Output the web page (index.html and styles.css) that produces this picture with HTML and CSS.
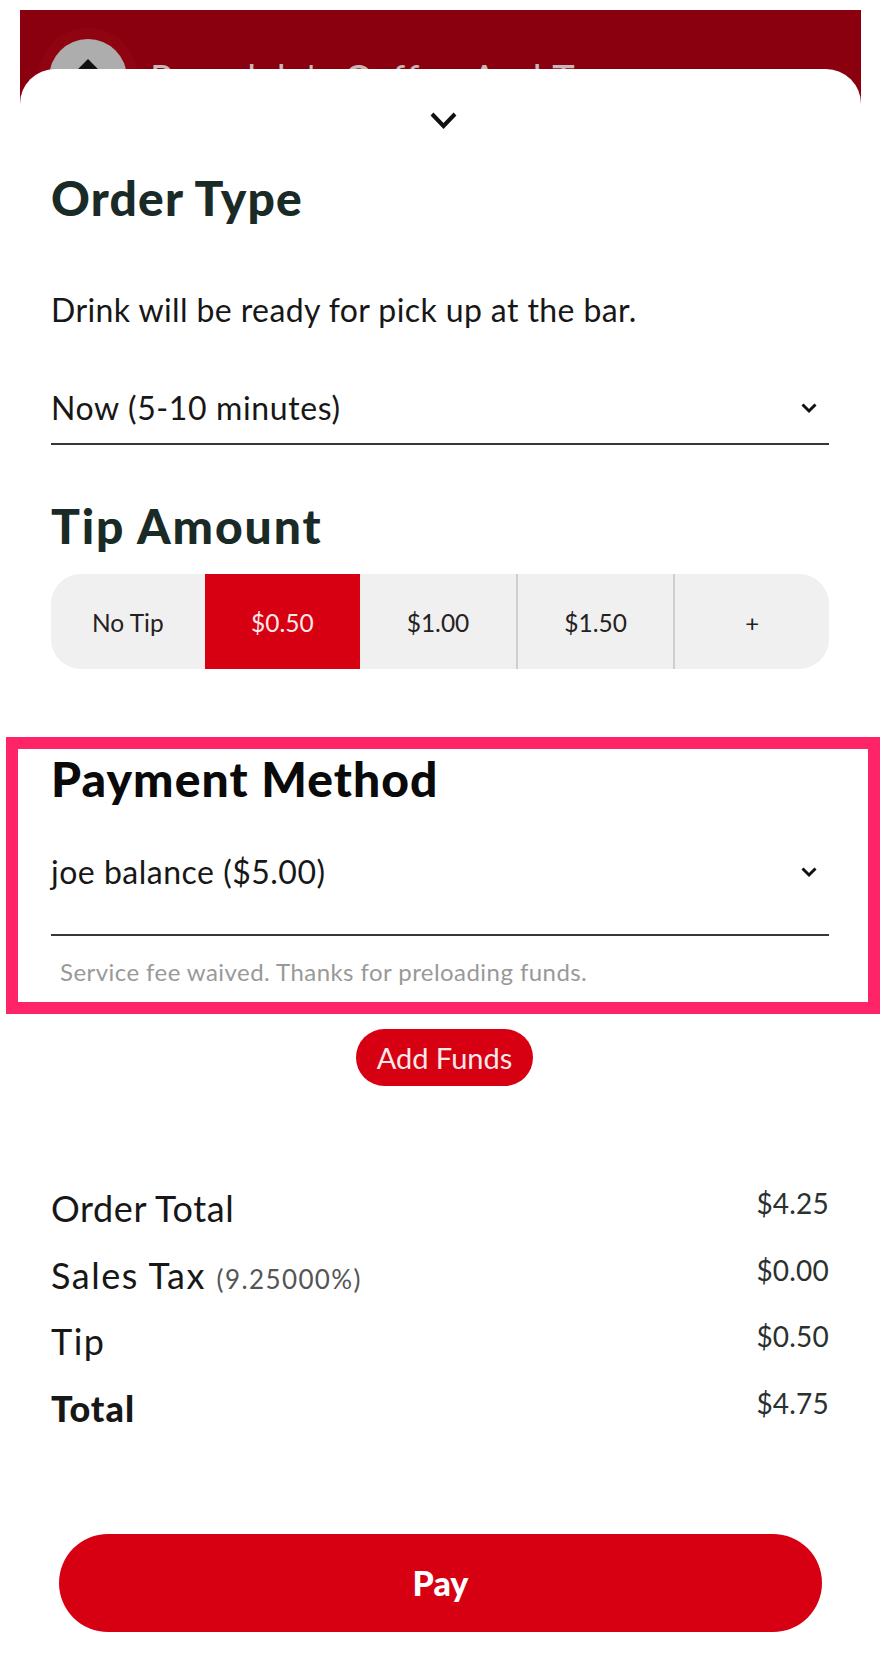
FILE: index.html
```html
<!DOCTYPE html>
<html lang="en">
<head>
<meta charset="utf-8">
<title>Checkout</title>
<link rel="stylesheet" href="styles.css">
</head>
<body>
<div class="frame">
  <header class="venue">
    <div class="avatar-glow"><div class="avatar"><span class="avatar-arrow"></span></div></div>
    <div class="venue-name">Rosedale's Coffee And Tea</div>
  </header>
  <main class="sheet">
    <div class="handle">
      <svg class="handle-icon" viewBox="0 0 27 17" aria-hidden="true"><path d="M2 2 L13.5 14 L25 2" fill="none" stroke="#111" stroke-width="4"/></svg>
    </div>
    <h2 class="heading">Order Type</h2>
    <p class="note">Drink will be ready for pick up at the bar.</p>
    <div class="select select-time">
      <span>Now (5-10 minutes)</span>
      <svg class="caret" viewBox="0 0 16 11" aria-hidden="true"><path d="M1.5 1.5 L8 8 L14.5 1.5" fill="none" stroke="#111" stroke-width="3"/></svg>
    </div>
    <h2 class="heading heading-tip">Tip Amount</h2>
    <div class="tips">
      <div class="tip tip-first">No Tip</div>
      <div class="tip tip-active">$0.50</div>
      <div class="tip">$1.00</div>
      <div class="tip">$1.50</div>
      <div class="tip tip-plus">+</div>
    </div>
    <section class="payment">
      <div class="highlight"></div>
      <h2 class="heading heading-pay">Payment Method</h2>
      <div class="select select-pay">
        <span>joe balance ($5.00)</span>
        <svg class="caret" viewBox="0 0 16 11" aria-hidden="true"><path d="M1.5 1.5 L8 8 L14.5 1.5" fill="none" stroke="#111" stroke-width="3"/></svg>
      </div>
      <p class="fee">Service fee waived. Thanks for preloading funds.</p>
    </section>
    <button class="add-funds">Add Funds</button>
    <div class="totals">
      <div class="row"><span class="label">Order Total</span><span class="amount">$4.25</span></div>
      <div class="row"><span class="label label-wide">Sales Tax <small class="rate">(9.25000%)</small></span><span class="amount">$0.00</span></div>
      <div class="row"><span class="label label-wide">Tip</span><span class="amount">$0.50</span></div>
      <div class="row"><span class="label label-total">Total</span><span class="amount">$4.75</span></div>
    </div>
    <button class="pay">Pay</button>
  </main>
</div>
</body>
</html>
```

FILE: styles.css
```css
* { box-sizing: border-box; }
html, body { margin: 0; padding: 0; background: #fff; height: 1656px; overflow: hidden; }
body { padding: 10px 25px 0 20px; font-family: "Lato", "Liberation Sans", sans-serif; color: #171717; }
.frame { width: 841px; }

.venue {
  height: 110px;
  background: #8a000e;
  display: flex;
  align-items: flex-start;
  padding: 18px 0 0 18px;
}
.avatar-glow {
  width: 100px; height: 100px; border-radius: 50%;
  background: #8f0410;
  display: flex; align-items: center; justify-content: center;
  flex: none;
}
.avatar {
  width: 78px; height: 78px; border-radius: 50%;
  background: #adadad;
  display: flex; justify-content: center;
  padding-top: 23px;
}
.avatar-arrow {
  width: 14px; height: 14px; background: #111;
  transform: rotate(45deg);
}
.venue-name {
  margin: 27px 0 0 12px;
  font-size: 38px; line-height: 46px;
  color: #c9b6b8;
  white-space: nowrap;
  letter-spacing: 1px;
}

.sheet {
  position: relative;
  margin-top: -51px;
  background: #fff;
  border-radius: 35px 35px 0 0;
  padding: 0 32px 0 31px;
  height: 1587px;
}
.handle { height: 104px; display: flex; justify-content: center; padding: 43px 0 0 6px; }
.handle-icon { width: 27px; height: 17px; }

.heading { margin: 0; font-size: 48px; line-height: 50px; font-weight: 900; color: #1a2a27; letter-spacing: 1.2px; }
.heading-tip { margin-top: 56px; letter-spacing: 1.9px; }
.heading-pay { color: #0a0a0a; letter-spacing: 1.1px; }
.note { margin: 67px 0 0; font-size: 32px; line-height: 40px; white-space: nowrap; letter-spacing: 0.4px; }

.select {
  display: flex; justify-content: space-between; align-items: center;
  font-size: 32px; line-height: 40px;
  letter-spacing: 0.5px;
  border-bottom: 2px solid #3a3536;
}
.select-time { margin-top: 58px; padding-bottom: 15px; letter-spacing: 0.62px; }
.select-pay { margin-top: 48px; padding-bottom: 42px; }
.caret { width: 16px; height: 11px; margin-right: 12px; }

.tips {
  margin-top: 23px; height: 95px;
  display: flex;
  background: #f0f0f0;
  border-radius: 30px;
  overflow: hidden;
}
.tip {
  flex: 156;
  display: flex; align-items: center; justify-content: center;
  padding-top: 2px;
  font-size: 24.5px; color: #26211f;
  border-left: 2px solid #cfcfcf;
}
.tip-first { flex: 154; border-left: 0; }
.tip-active { background: #d60012; color: #fbe9ea; border-left: 0; }
.tip-active + .tip { border-left: 0; }
.tip-plus { flex: 154; font-size: 24px; }

.payment { position: relative; margin-top: 85px; }
.highlight {
  position: absolute;
  top: -17px; bottom: -27px; left: -45px; right: -51px;
  border: 12px solid #ff2468;
  pointer-events: none;
}
.fee { margin: 21px 0 0; padding-left: 9px; font-size: 24px; line-height: 30px; color: #999; letter-spacing: 0.44px; }

.add-funds {
  display: block;
  margin: 42px 0 0 305px;
  width: 177px; height: 57px;
  border: 0; border-radius: 29px;
  background: #d60012; color: #fbe9ea;
  font-family: inherit; font-size: 29px;
}

.totals { margin-top: 100px; }
.row { height: 66.67px; display: flex; justify-content: space-between; align-items: flex-start; }
.label { font-size: 36px; line-height: 44px; letter-spacing: 0.6px; }
.label-wide { letter-spacing: 1.5px; }
.label-total { font-weight: 900; letter-spacing: 1px; }
.rate { font-size: 26px; color: #555; letter-spacing: 1.4px; }
.amount { font-size: 28px; line-height: 34px; color: #2a3130; letter-spacing: 0.2px; }

.pay {
  display: block;
  margin: 81px 7px 0 8px;
  width: calc(100% - 15px); height: 98px;
  border: 0; border-radius: 50px;
  background: #d60012; color: #fff;
  font-family: inherit; font-size: 34px; font-weight: 900;
}
```
